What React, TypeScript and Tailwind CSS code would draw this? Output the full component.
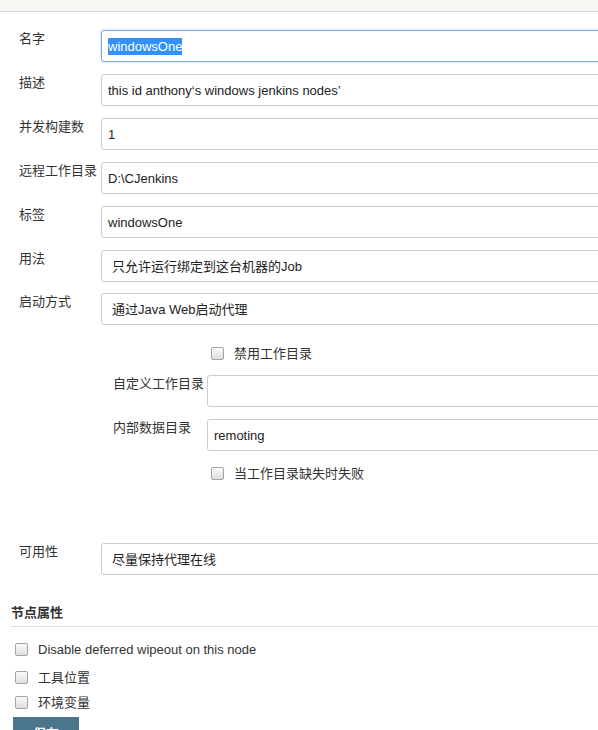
import type { ReactNode } from 'react';

function Field({ children, select = false, focused = false }: { children?: ReactNode; select?: boolean; focused?: boolean }) {
  return (
    <div
      className={
        'flex h-[32px] w-[520px] shrink-0 items-center rounded-[3px] border bg-white leading-[17px] text-[#222] ' +
        (select ? 'px-[10px] ' : 'px-[6px] ') +
        (focused ? 'border-[#7fa9ea] shadow-[0_0_2px_#a9c7f3]' : 'border-[#cccccc]')
      }
    >
      {children}
    </div>
  );
}

function Row({ label, children, labelWidth = 'w-[82px]', className = '' }: { label: string; children: ReactNode; labelWidth?: string; className?: string }) {
  return (
    <div className={'flex items-start ' + className}>
      <div className={labelWidth + ' shrink-0 leading-[17px] text-[#333]'}>{label}</div>
      {children}
    </div>
  );
}

function Check({ label, className = '' }: { label: string; className?: string }) {
  return (
    <div className={'flex h-[20px] items-center ' + className}>
      <span className="h-[13px] w-[13px] shrink-0 rounded-[2px] border border-[#a3a3a3] bg-gradient-to-b from-[#fbfbfb] to-[#dedede]" />
      <span className="ml-[10px] leading-[17px] text-[#333]">{label}</span>
    </div>
  );
}

export default function App() {
  return (
    <div className="h-[730px] w-[598px] overflow-hidden bg-white text-[13px] font-['Liberation_Sans','Noto_Sans_CJK_SC',sans-serif]">
      {/* top strip */}
      <div className="h-[12px] border-b border-[#dadada] bg-[#f6f7f2]" />

      {/* node form */}
      <div className="pl-[19px] pt-[18px]">
        <Row label="名字" className="mb-[12px]">
          <Field focused>
            <span className="bg-[#3390ff] text-white">windowsOne</span>
          </Field>
        </Row>
        <Row label="描述" className="mb-[12px]">
          <Field>this id anthony‘s windows jenkins nodes’</Field>
        </Row>
        <Row label="并发构建数" className="mb-[12px]">
          <Field>1</Field>
        </Row>
        <Row label="远程工作目录" className="mb-[12px]">
          <Field>D:\CJenkins</Field>
        </Row>
        <Row label="标签" className="mb-[12px]">
          <Field>windowsOne</Field>
        </Row>
        <Row label="用法" className="mb-[11px]">
          <Field select>只允许运行绑定到这台机器的Job</Field>
        </Row>
        <Row label="启动方式">
          <Field select>通过Java Web启动代理</Field>
        </Row>

        {/* launcher options */}
        <div className="pl-[94px]">
          <Check label="禁用工作目录" className="ml-[98px] mt-[18px]" />
          <Row label="自定义工作目录" labelWidth="w-[94px]" className="mt-[12px]">
            <Field />
          </Row>
          <Row label="内部数据目录" labelWidth="w-[94px]" className="mt-[12px]">
            <Field>remoting</Field>
          </Row>
          <Check label="当工作目录缺失时失败" className="ml-[98px] mt-[12px]" />
        </div>

        <Row label="可用性" className="mt-[60px]">
          <Field select>尽量保持代理在线</Field>
        </Row>
      </div>

      {/* node properties */}
      <div className="pl-[11px]">
        <div className="mt-[29px] border-b border-[#dddddd] pb-[5px] font-bold leading-[17px] text-[#333]">节点属性</div>
        <div className="pl-[4px]">
          <Check label="Disable deferred wipeout on this node" className="mt-[12px]" />
          <Check label="工具位置" className="mt-[8px]" />
          <Check label="环境变量" className="mt-[5px]" />
        </div>
        <button className="ml-[2px] mt-[5px] h-[32px] w-[66px] bg-[#4b758b] pt-[1px] font-bold text-white">保存</button>
      </div>
    </div>
  );
}
